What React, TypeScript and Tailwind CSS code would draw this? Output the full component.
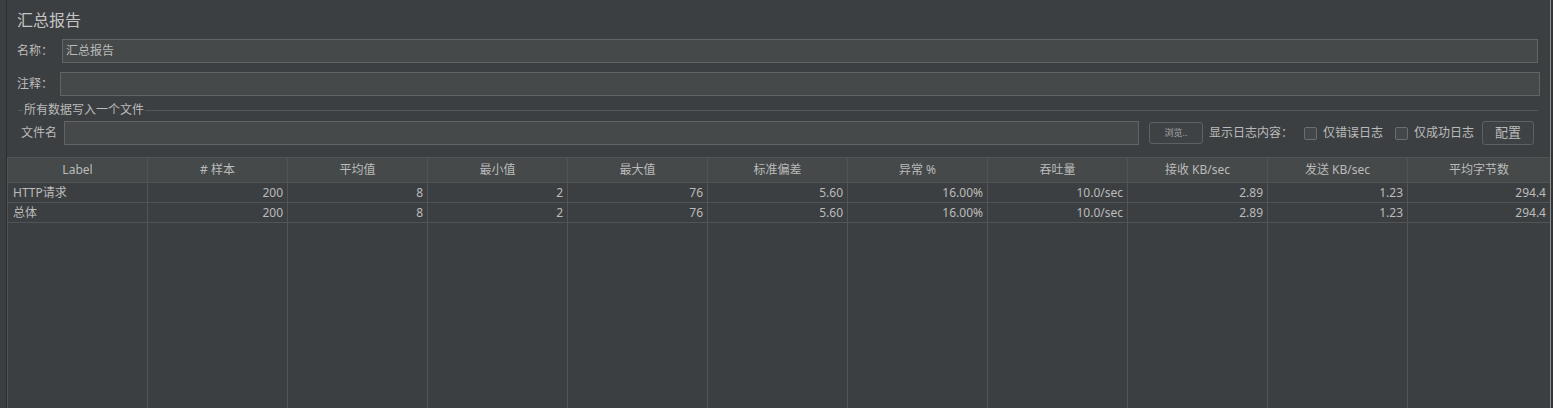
import React from 'react';

const columns = [
  'Label',
  '# 样本',
  '平均值',
  '最小值',
  '最大值',
  '标准偏差',
  '异常 %',
  '吞吐量',
  '接收 KB/sec',
  '发送 KB/sec',
  '平均字节数',
];

const rows = [
  ['HTTP请求', '200', '8', '2', '76', '5.60', '16.00%', '10.0/sec', '2.89', '1.23', '294.4'],
  ['总体', '200', '8', '2', '76', '5.60', '16.00%', '10.0/sec', '2.89', '1.23', '294.4'],
];

const font = { fontFamily: '"Noto Sans", "Noto Sans CJK SC", sans-serif' };

function Checkbox({ label }: { label: string }) {
  return (
    <div className="flex items-center gap-[6px]">
      <div className="w-[13px] h-[13px] rounded-[2px] border border-[#6b6e70] bg-[#43474a]" />
      <span>{label}</span>
    </div>
  );
}

export default function App() {
  return (
    <div
      className="w-[1553px] h-[408px] bg-[#3c3f41] flex overflow-hidden text-[12px] text-[#bbbbbb]"
      style={font}
    >
      <div className="w-[6px] shrink-0" />
      <div className="w-px shrink-0 bg-[#2b2d2e]" />

      <div className="flex-1 flex flex-col min-w-0">
        <div className="pl-[10px] pt-[10px] text-[16px] leading-[20px] text-[#c4c4c4]">汇总报告</div>

        <div className="flex items-center mt-[9px] h-[24px] pl-[10px] pr-[12px]">
          <span className="w-[45px] shrink-0">名称：</span>
          <div className="flex-1 h-full border border-[#646464] bg-[#45494a] flex items-center pl-[3px]">
            汇总报告
          </div>
        </div>

        <div className="flex items-center mt-[9px] h-[24px] pl-[10px] pr-[10px]">
          <span className="w-[43px] shrink-0">注释：</span>
          <div className="flex-1 h-full border border-[#646464] bg-[#45494a]" />
        </div>

        <div className="flex items-center mt-[6px] h-[16px] pl-[11px] pr-[12px]">
          <div className="w-[5px] h-px bg-[#55585a]" />
          <span className="px-[1px] leading-[16px]">所有数据写入一个文件</span>
          <div className="flex-1 h-px bg-[#55585a]" />
        </div>

        <div className="flex items-center mt-[3px] h-[24px] pl-[14px]">
          <span className="w-[43px] shrink-0">文件名</span>
          <div className="w-[1075px] h-full border border-[#646464] bg-[#45494a]" />
          <div className="ml-[10px] w-[54px] h-[22px] rounded-[3px] border border-[#5e6163] bg-[#3e4244] flex items-center justify-center text-[9px] text-[#a8a8a8]">
            浏览..
          </div>
          <span className="ml-[6px]">显示日志内容：</span>
          <div className="ml-[11px]">
            <Checkbox label="仅错误日志" />
          </div>
          <div className="ml-[12px]">
            <Checkbox label="仅成功日志" />
          </div>
          <div className="ml-[8px] w-[52px] h-[24px] rounded-[3px] border border-[#5e6163] bg-[#3e4244] flex items-center justify-center text-[13px]">
            配置
          </div>
        </div>

        <div className="mt-[12px] flex-1 flex flex-col border-l border-[#505456]">
          <div className="flex h-[26px] bg-[#45494a] border-t border-b border-[#505456]">
            {columns.map((c, i) => (
              <div
                key={i}
                className={
                  i === columns.length - 1
                    ? 'flex-1 flex items-center justify-center'
                    : 'w-[140px] shrink-0 border-r border-[#505456] flex items-center justify-center'
                }
              >
                {c}
              </div>
            ))}
          </div>
          <div className="flex-1 flex">
            {columns.map((_, ci) => (
              <div
                key={ci}
                className={
                  ci === columns.length - 1
                    ? 'flex-1 flex flex-col'
                    : 'w-[140px] shrink-0 border-r border-[#505456] flex flex-col'
                }
              >
                {rows.map((r, ri) => (
                  <div
                    key={ri}
                    className={
                      ci === 0
                        ? 'h-[20px] border-b border-[#505456] flex items-center pl-[5px]'
                        : 'h-[20px] border-b border-[#505456] flex items-center justify-end pr-[4px]'
                    }
                  >
                    {r[ci]}
                  </div>
                ))}
              </div>
            ))}
          </div>
        </div>
      </div>

      <div className="w-px shrink-0 bg-[#8c8e90]" />
      <div className="w-[2px] shrink-0 bg-[#313335]" />
    </div>
  );
}
